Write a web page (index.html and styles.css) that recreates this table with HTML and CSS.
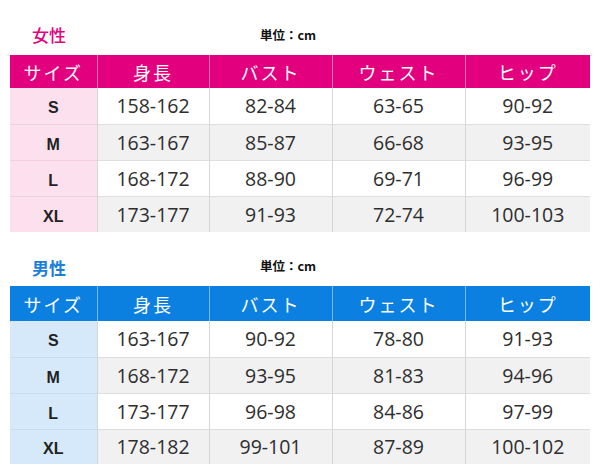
FILE: index.html
```html
<!DOCTYPE html>
<html lang="ja">
<head>
<meta charset="utf-8">
<link rel="stylesheet" href="styles.css">
</head>
<body>
<div class="page">
  <section class="chart women">
    <div class="title-row">
      <span class="title">女性</span>
      <span class="unit">単位：cm</span>
    </div>
    <table>
      <colgroup><col class="c1"><col class="c2"><col class="c3"><col class="c4"><col class="c5"></colgroup>
      <thead><tr><th>サイズ</th><th>身長</th><th>バスト</th><th>ウェスト</th><th>ヒップ</th></tr></thead>
      <tbody>
        <tr><td class="sz">S</td><td>158-162</td><td>82-84</td><td>63-65</td><td>90-92</td></tr>
        <tr class="alt"><td class="sz">M</td><td>163-167</td><td>85-87</td><td>66-68</td><td>93-95</td></tr>
        <tr><td class="sz">L</td><td>168-172</td><td>88-90</td><td>69-71</td><td>96-99</td></tr>
        <tr class="alt"><td class="sz">XL</td><td>173-177</td><td>91-93</td><td>72-74</td><td>100-103</td></tr>
      </tbody>
    </table>
  </section>
  <section class="chart men">
    <div class="title-row">
      <span class="title">男性</span>
      <span class="unit">単位：cm</span>
    </div>
    <table>
      <colgroup><col class="c1"><col class="c2"><col class="c3"><col class="c4"><col class="c5"></colgroup>
      <thead><tr><th>サイズ</th><th>身長</th><th>バスト</th><th>ウェスト</th><th>ヒップ</th></tr></thead>
      <tbody>
        <tr><td class="sz">S</td><td>163-167</td><td>90-92</td><td>78-80</td><td>91-93</td></tr>
        <tr class="alt"><td class="sz">M</td><td>168-172</td><td>93-95</td><td>81-83</td><td>94-96</td></tr>
        <tr><td class="sz">L</td><td>173-177</td><td>96-98</td><td>84-86</td><td>97-99</td></tr>
        <tr class="alt"><td class="sz">XL</td><td>178-182</td><td>99-101</td><td>87-89</td><td>100-102</td></tr>
      </tbody>
    </table>
  </section>
</div>
</body>
</html>
```
FILE: styles.css
```css
html, body {
  margin: 0;
  padding: 0;
  background: #ffffff;
}
body {
  width: 600px;
  height: 472px;
  overflow: hidden;
  font-family: "Open Sans", "Noto Sans CJK JP", sans-serif;
  color: #2b2b2b;
}
.page {
  padding: 0 10px;
}
.title-row {
  display: flex;
  align-items: flex-end;
  padding-bottom: 8px;
  box-sizing: content-box;
}
.women .title-row { height: 47px; }
.men .title-row { height: 46px; }
.title {
  width: 228px;
  padding-left: 22px;
  font-family: "Noto Sans CJK JP", sans-serif;
  font-size: 17px;
  font-weight: 500;
  line-height: 20px;
}
.women .title { color: #e4007f; margin-bottom: 2px; }
.men .title { color: #1b7fd8; font-weight: 700; }
.unit {
  font-family: "Noto Sans CJK JP", sans-serif;
  font-size: 12.5px;
  font-weight: 700;
  color: #111;
  line-height: 18px;
  margin-bottom: 3px;
}
table {
  width: 580px;
  border-collapse: collapse;
  table-layout: fixed;
}
col.c1 { width: 87px; }
col.c2 { width: 112px; }
col.c3 { width: 123px; }
col.c4 { width: 133px; }
col.c5 { width: 125px; }
th {
  font-family: "Noto Sans CJK JP", sans-serif;
  font-weight: 400;
  font-size: 18px;
  line-height: 20px;
  color: #ffffff;
  letter-spacing: 2px;
  padding: 0;
  border-left: 1px solid rgba(255,255,255,0.45);
}
th:first-child { border-left: none; }
.women th { background: #e3007e; height: 33px; }
.men th { background: #0b80e0; height: 35px; }
td {
  text-align: center;
  font-size: 19.5px;
  line-height: 22px;
  height: 35px;
  padding: 0;
  border-left: 1px solid #d6d6d6;
  border-top: 1px solid #dedede;
  color: #2e2e2e;
}
tbody tr:first-child td { border-top: none; height: 36px; }
tr.alt td { background: #f1f1f1; }
td.sz {
  font-family: "Liberation Sans", Arial, sans-serif;
  font-weight: 700;
  font-size: 16px;
  line-height: 18px;
  color: #222;
  border-left: none;
  padding-top: 4px;
  height: 31px;
}
tbody tr:first-child td.sz { height: 32px; }
.women td.sz, .women tr.alt td.sz { background: #fde0ee; border-top-color: #f3cfe0; }
.men td.sz, .men tr.alt td.sz { background: #d6e9fb; border-top-color: #c8dcef; }
.men tbody tr:last-child td { height: 34px; }
.men tbody tr:last-child td.sz { height: 30px; }
```
